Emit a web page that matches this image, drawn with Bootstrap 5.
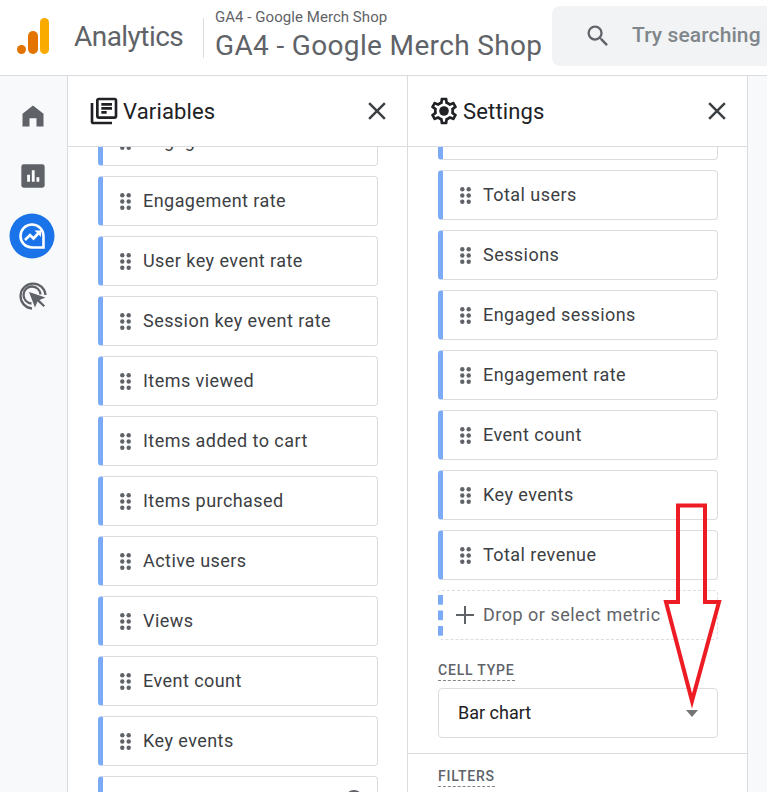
<!DOCTYPE html>
<html lang="en"><head><meta charset="utf-8"><title>Analytics</title>
<link href="https://cdn.jsdelivr.net/npm/bootstrap@5.3.0/dist/css/bootstrap.min.css" rel="stylesheet">
<style>
html,body{height:792px;overflow:hidden;background:#fff}
body{font-family:Roboto,"Liberation Sans",sans-serif;color:#3c4043;position:relative}
.ga-top{height:76px;border-bottom:1px solid #dadce0;overflow:hidden;white-space:nowrap}
.ga-logo{margin-left:16px;width:34px;flex:none;margin-top:-3px}
.ga-brand{margin-left:24px;font-size:28px;color:#5f6368;letter-spacing:-.55px;width:129px;flex:none;margin-top:-2px}
.ga-sep{width:1px;height:40px;background:#dadce0;flex:none}
.ga-acct{margin-left:11px;width:337px;flex:none;color:#5f6368}
.ga-acct small{display:block;font-size:15px;line-height:16px;margin-top:-3px;margin-bottom:3px;letter-spacing:.05px}
.ga-acct strong{display:block;font-weight:400;font-size:28px;line-height:36px;letter-spacing:.35px}
.ga-search{width:260px;height:60px;background:#f1f3f4;border-radius:8px;flex:none;padding-left:32px;font-size:21px;font-weight:500;color:#80868b;gap:20px;margin-top:-4px;letter-spacing:.1px}
.ga-main{height:716px}
.ga-rail{width:68px;background:#f8f9fa;border-right:1px solid #dadce0;flex:none;padding-top:10px}
.ga-railbtn{width:48px;height:60px;margin-left:9px}
.ga-railactive{margin-left:8px}
.ga-panel{width:340px;border-right:1px solid #dadce0;flex:none;overflow:hidden;height:716px}
.ga-phead{height:71px;border-bottom:1px solid #dadce0;padding:0 15px 0 20px;font-size:22px;color:#202124;gap:3px;flex:none;letter-spacing:.15px}
.ga-phead .ga-x{margin-left:auto}
.ga-list{padding:0 29px 0 30px;gap:10px;overflow:hidden;flex:1 1 auto}
.ga-v{margin-top:-31px}
.ga-s{margin-top:-37px}
.ga-chip{height:50px;flex:none;border:1px solid #dadce0;border-left:5px solid #7baaf7;border-radius:4px;padding-left:17px;font-size:18px;color:#3c4043;gap:12px;letter-spacing:.45px;background:#fff}
.ga-chip span,.ga-drop span,.ga-select span{padding-bottom:2px}
.ga-drop{border:1px dashed #dadce0;border-left:none;height:50px;flex:none;border-radius:4px;color:#5f6368;font-size:18px;letter-spacing:.5px;padding-left:18px;gap:9px;position:relative}
.ga-dash{width:5px;height:50px;background:linear-gradient(#7baaf7 0 10px,transparent 10px) 0 4px/100% 15.5px;position:absolute;left:0;top:0}
.ga-cap{font-size:14px;font-weight:500;letter-spacing:.8px;color:#5f6368;border-bottom:1px dashed #80868b;line-height:16px;padding-bottom:2px;align-self:flex-start;flex:none}
.ga-capfirst{margin:12px 0 -3px}
.ga-select{height:50px;border:1px solid #dadce0;border-radius:4px;padding:0 19px;font-size:18px;color:#202124;flex:none}
.ga-select .ga-caret{width:0;height:0;padding:0;border-left:6.5px solid transparent;border-right:6.5px solid transparent;border-top:7px solid #757575}
.ga-rule{height:1px;background:#dadce0;margin:5px -29px 4px -30px;flex:none}
.ga-end{background:#f8f9fa;flex:1 1 auto}
.ga-arrow{position:absolute;left:660px;top:500px;pointer-events:none}
.ga-peek{position:absolute;left:241px;top:12px}
</style></head><body>
<header class="ga-top d-flex align-items-center">
  <svg class="ga-logo" width="34" height="36" viewBox="0 0 34 36"><circle cx="5.500" cy="31.500" r="4.500" fill="#e37400"/><rect x="12" y="13" width="10" height="23" rx="5" fill="#e37400"/><rect x="24" y="0" width="9" height="36" rx="4.500" fill="#f9ab00"/></svg>
  <div class="ga-brand">Analytics</div>
  <div class="ga-sep"></div>
  <div class="ga-acct"><small>GA4 - Google Merch Shop</small><strong>GA4 - Google Merch Shop</strong></div>
  <div class="ga-search d-flex align-items-center">
    <svg width="28" height="28" viewBox="0 0 24 24" fill="#5f6368"><path d="M15.500 14h-.79l-.28-.27A6.470 6.470 0 0 0 16 9.500 6.500 6.500 0 1 0 9.500 16c1.610 0 3.090-.59 4.230-1.570l.27.28v.79l5 4.990L20.490 19l-4.990-5zm-6 0C7.010 14 5 11.990 5 9.500S7.010 5 9.500 5 14 7.010 14 9.500 11.990 14 9.500 14z"/></svg>
    <span>Try searching</span>
  </div>
</header>
<main class="ga-main d-flex">
  <nav class="ga-rail d-flex flex-column">
    <div class="ga-railbtn d-flex align-items-center justify-content-center"><svg width="28" height="28" viewBox="0 0 24 24" fill="#5f6368"><path d="M12 3 3 10v11h6v-7h6v7h6V10z"/></svg></div>
    <div class="ga-railbtn d-flex align-items-center justify-content-center"><svg width="28" height="28" viewBox="0 0 24 24"><rect x="2" y="2" width="20" height="20" rx="2" fill="#5f6368"/><path d="M7 11h2.400v6H7zM11 7h2.400v10H11zM15 13h2.400v4H15z" fill="#fff"/></svg></div>
    <div class="ga-railbtn ga-railactive d-flex align-items-center justify-content-center"><svg width="46" height="46" viewBox="0 0 46 46"><circle cx="23" cy="23" r="22.500" fill="#1a73e8"/><path d="M23 11.500a11.500 11.500 0 1 0 0 23h11.500V23A11.500 11.500 0 0 0 23 11.500z" fill="none" stroke="#fff" stroke-width="2.600"/><path d="M16 27l5-5 3.500 3.500 6-6.500" fill="none" stroke="#fff" stroke-width="2.600"/><path d="M25.500 17.500h6.500v6.500z" fill="#fff"/></svg></div>
    <div class="ga-railbtn d-flex align-items-center justify-content-center"><svg width="30" height="30" viewBox="0 0 30 30" fill="none" stroke="#5f6368" stroke-width="2.300"><path d="M14 27.500A12.500 12.500 0 1 1 27.500 14"/><path d="M13.500 22.500a8.500 8.500 0 1 1 9-9"/><path d="M11 11l6 15.500 2.500-6 6 5.500 1.500-1.500-5.500-5.500 6-2.500z" fill="#5f6368" stroke="none"/></svg></div>
  </nav>

  <section class="ga-panel d-flex flex-column">
    <div class="ga-phead d-flex align-items-center">
      <svg width="32" height="32" viewBox="0 0 24 24" fill="#202124"><path d="M4 6H2v14c0 1.100.9 2 2 2h14v-2H4V6zm16-4H8c-1.100 0-2 .9-2 2v12c0 1.100.9 2 2 2h12c1.100 0 2-.9 2-2V4c0-1.100-.9-2-2-2zm0 14H8V4h12v12zM10 9h8v2h-8zm0 3h4v2h-4zm0-6h8v2h-8z"/></svg>
      <span>Variables</span>
      <svg class="ga-x" width="30" height="30" viewBox="0 0 24 24" fill="#3c4043"><path d="M19 6.410 17.590 5 12 10.590 6.410 5 5 6.410 10.590 12 5 17.590 6.410 19 12 13.410 17.590 19 19 17.590 13.410 12z"/></svg>
    </div>
    <div class="ga-list d-flex flex-column">
      <div class="ga-chip ga-v d-flex align-items-center"><svg width="11" height="17" viewBox="0 0 11 17" fill="#5f6368"><circle cx="2.300" cy="2.300" r="2.200"/><circle cx="8.700" cy="2.300" r="2.200"/><circle cx="2.300" cy="8.500" r="2.200"/><circle cx="8.700" cy="8.500" r="2.200"/><circle cx="2.300" cy="14.700" r="2.200"/><circle cx="8.700" cy="14.700" r="2.200"/></svg><span>Engaged sessions</span></div>
      <div class="ga-chip d-flex align-items-center"><svg width="11" height="17" viewBox="0 0 11 17" fill="#5f6368"><circle cx="2.300" cy="2.300" r="2.200"/><circle cx="8.700" cy="2.300" r="2.200"/><circle cx="2.300" cy="8.500" r="2.200"/><circle cx="8.700" cy="8.500" r="2.200"/><circle cx="2.300" cy="14.700" r="2.200"/><circle cx="8.700" cy="14.700" r="2.200"/></svg><span>Engagement rate</span></div>
      <div class="ga-chip d-flex align-items-center"><svg width="11" height="17" viewBox="0 0 11 17" fill="#5f6368"><circle cx="2.300" cy="2.300" r="2.200"/><circle cx="8.700" cy="2.300" r="2.200"/><circle cx="2.300" cy="8.500" r="2.200"/><circle cx="8.700" cy="8.500" r="2.200"/><circle cx="2.300" cy="14.700" r="2.200"/><circle cx="8.700" cy="14.700" r="2.200"/></svg><span>User key event rate</span></div>
      <div class="ga-chip d-flex align-items-center"><svg width="11" height="17" viewBox="0 0 11 17" fill="#5f6368"><circle cx="2.300" cy="2.300" r="2.200"/><circle cx="8.700" cy="2.300" r="2.200"/><circle cx="2.300" cy="8.500" r="2.200"/><circle cx="8.700" cy="8.500" r="2.200"/><circle cx="2.300" cy="14.700" r="2.200"/><circle cx="8.700" cy="14.700" r="2.200"/></svg><span>Session key event rate</span></div>
      <div class="ga-chip d-flex align-items-center"><svg width="11" height="17" viewBox="0 0 11 17" fill="#5f6368"><circle cx="2.300" cy="2.300" r="2.200"/><circle cx="8.700" cy="2.300" r="2.200"/><circle cx="2.300" cy="8.500" r="2.200"/><circle cx="8.700" cy="8.500" r="2.200"/><circle cx="2.300" cy="14.700" r="2.200"/><circle cx="8.700" cy="14.700" r="2.200"/></svg><span>Items viewed</span></div>
      <div class="ga-chip d-flex align-items-center"><svg width="11" height="17" viewBox="0 0 11 17" fill="#5f6368"><circle cx="2.300" cy="2.300" r="2.200"/><circle cx="8.700" cy="2.300" r="2.200"/><circle cx="2.300" cy="8.500" r="2.200"/><circle cx="8.700" cy="8.500" r="2.200"/><circle cx="2.300" cy="14.700" r="2.200"/><circle cx="8.700" cy="14.700" r="2.200"/></svg><span>Items added to cart</span></div>
      <div class="ga-chip d-flex align-items-center"><svg width="11" height="17" viewBox="0 0 11 17" fill="#5f6368"><circle cx="2.300" cy="2.300" r="2.200"/><circle cx="8.700" cy="2.300" r="2.200"/><circle cx="2.300" cy="8.500" r="2.200"/><circle cx="8.700" cy="8.500" r="2.200"/><circle cx="2.300" cy="14.700" r="2.200"/><circle cx="8.700" cy="14.700" r="2.200"/></svg><span>Items purchased</span></div>
      <div class="ga-chip d-flex align-items-center"><svg width="11" height="17" viewBox="0 0 11 17" fill="#5f6368"><circle cx="2.300" cy="2.300" r="2.200"/><circle cx="8.700" cy="2.300" r="2.200"/><circle cx="2.300" cy="8.500" r="2.200"/><circle cx="8.700" cy="8.500" r="2.200"/><circle cx="2.300" cy="14.700" r="2.200"/><circle cx="8.700" cy="14.700" r="2.200"/></svg><span>Active users</span></div>
      <div class="ga-chip d-flex align-items-center"><svg width="11" height="17" viewBox="0 0 11 17" fill="#5f6368"><circle cx="2.300" cy="2.300" r="2.200"/><circle cx="8.700" cy="2.300" r="2.200"/><circle cx="2.300" cy="8.500" r="2.200"/><circle cx="8.700" cy="8.500" r="2.200"/><circle cx="2.300" cy="14.700" r="2.200"/><circle cx="8.700" cy="14.700" r="2.200"/></svg><span>Views</span></div>
      <div class="ga-chip d-flex align-items-center"><svg width="11" height="17" viewBox="0 0 11 17" fill="#5f6368"><circle cx="2.300" cy="2.300" r="2.200"/><circle cx="8.700" cy="2.300" r="2.200"/><circle cx="2.300" cy="8.500" r="2.200"/><circle cx="8.700" cy="8.500" r="2.200"/><circle cx="2.300" cy="14.700" r="2.200"/><circle cx="8.700" cy="14.700" r="2.200"/></svg><span>Event count</span></div>
      <div class="ga-chip d-flex align-items-center"><svg width="11" height="17" viewBox="0 0 11 17" fill="#5f6368"><circle cx="2.300" cy="2.300" r="2.200"/><circle cx="8.700" cy="2.300" r="2.200"/><circle cx="2.300" cy="8.500" r="2.200"/><circle cx="8.700" cy="8.500" r="2.200"/><circle cx="2.300" cy="14.700" r="2.200"/><circle cx="8.700" cy="14.700" r="2.200"/></svg><span>Key events</span></div>
      <div class="ga-chip d-flex align-items-center position-relative"><svg class="ga-peek" width="20" height="20" viewBox="0 0 20 20" fill="none" stroke="#5f6368" stroke-width="2"><circle cx="10" cy="10" r="8"/></svg></div>
    </div>
  </section>

  <section class="ga-panel d-flex flex-column">
    <div class="ga-phead d-flex align-items-center">
      <svg width="32" height="32" viewBox="0 0 24 24" fill="#202124"><path d="M19.430 12.980c.04-.32.07-.64.07-.98s-.03-.66-.07-.98l2.110-1.650c.19-.15.24-.42.12-.64l-2-3.460c-.12-.22-.39-.3-.61-.22l-2.490 1c-.52-.4-1.080-.73-1.690-.98l-.38-2.650A.49.49 0 0 0 14 2h-4c-.25 0-.46.18-.49.42l-.38 2.650c-.61.25-1.170.59-1.690.98l-2.490-1c-.23-.09-.49 0-.61.22l-2 3.460c-.13.22-.07.49.12.64l2.110 1.650c-.04.32-.07.65-.07.98s.03.66.07.98l-2.110 1.650c-.19.15-.24.42-.12.64l2 3.460c.12.22.39.3.61.22l2.490-1c.52.4 1.080.73 1.690.98l.38 2.650c.03.24.24.42.49.42h4c.25 0 .46-.18.49-.42l.38-2.650c.61-.25 1.170-.59 1.690-.98l2.490 1c.23.09.49 0 .61-.22l2-3.460c.12-.22.07-.49-.12-.64l-2.110-1.650zM17.450 11.270c.04.31.05.52.05.73s-.02.43-.05.73l-.14 1.130.89.7 1.080.84-.7 1.210-1.270-.51-1.040-.42-.9.68c-.43.32-.84.56-1.250.73l-1.060.43-.16 1.130-.2 1.350h-1.400l-.19-1.350-.16-1.130-1.060-.43c-.43-.18-.83-.41-1.230-.71l-.91-.7-1.060.43-1.270.51-.7-1.210 1.080-.84.89-.7-.14-1.130c-.03-.31-.05-.54-.05-.74s.02-.43.05-.73l.14-1.130-.89-.7-1.080-.84.7-1.210 1.270.51 1.040.42.9-.68c.43-.32.84-.56 1.250-.73l1.060-.43.16-1.130.2-1.350h1.390l.19 1.350.16 1.130 1.060.43c.43.18.83.41 1.230.71l.91.7 1.060-.43 1.270-.51.7 1.210-1.070.85-.89.7.14 1.130z"/><circle cx="12" cy="12" r="3.600"/></svg>
      <span>Settings</span>
      <svg class="ga-x" width="30" height="30" viewBox="0 0 24 24" fill="#3c4043"><path d="M19 6.410 17.590 5 12 10.590 6.410 5 5 6.410 10.590 12 5 17.590 6.410 19 12 13.410 17.590 19 19 17.590 13.410 12z"/></svg>
    </div>
    <div class="ga-list d-flex flex-column">
      <div class="ga-chip ga-s d-flex align-items-center"></div>
      <div class="ga-chip d-flex align-items-center"><svg width="11" height="17" viewBox="0 0 11 17" fill="#5f6368"><circle cx="2.300" cy="2.300" r="2.200"/><circle cx="8.700" cy="2.300" r="2.200"/><circle cx="2.300" cy="8.500" r="2.200"/><circle cx="8.700" cy="8.500" r="2.200"/><circle cx="2.300" cy="14.700" r="2.200"/><circle cx="8.700" cy="14.700" r="2.200"/></svg><span>Total users</span></div>
      <div class="ga-chip d-flex align-items-center"><svg width="11" height="17" viewBox="0 0 11 17" fill="#5f6368"><circle cx="2.300" cy="2.300" r="2.200"/><circle cx="8.700" cy="2.300" r="2.200"/><circle cx="2.300" cy="8.500" r="2.200"/><circle cx="8.700" cy="8.500" r="2.200"/><circle cx="2.300" cy="14.700" r="2.200"/><circle cx="8.700" cy="14.700" r="2.200"/></svg><span>Sessions</span></div>
      <div class="ga-chip d-flex align-items-center"><svg width="11" height="17" viewBox="0 0 11 17" fill="#5f6368"><circle cx="2.300" cy="2.300" r="2.200"/><circle cx="8.700" cy="2.300" r="2.200"/><circle cx="2.300" cy="8.500" r="2.200"/><circle cx="8.700" cy="8.500" r="2.200"/><circle cx="2.300" cy="14.700" r="2.200"/><circle cx="8.700" cy="14.700" r="2.200"/></svg><span>Engaged sessions</span></div>
      <div class="ga-chip d-flex align-items-center"><svg width="11" height="17" viewBox="0 0 11 17" fill="#5f6368"><circle cx="2.300" cy="2.300" r="2.200"/><circle cx="8.700" cy="2.300" r="2.200"/><circle cx="2.300" cy="8.500" r="2.200"/><circle cx="8.700" cy="8.500" r="2.200"/><circle cx="2.300" cy="14.700" r="2.200"/><circle cx="8.700" cy="14.700" r="2.200"/></svg><span>Engagement rate</span></div>
      <div class="ga-chip d-flex align-items-center"><svg width="11" height="17" viewBox="0 0 11 17" fill="#5f6368"><circle cx="2.300" cy="2.300" r="2.200"/><circle cx="8.700" cy="2.300" r="2.200"/><circle cx="2.300" cy="8.500" r="2.200"/><circle cx="8.700" cy="8.500" r="2.200"/><circle cx="2.300" cy="14.700" r="2.200"/><circle cx="8.700" cy="14.700" r="2.200"/></svg><span>Event count</span></div>
      <div class="ga-chip d-flex align-items-center"><svg width="11" height="17" viewBox="0 0 11 17" fill="#5f6368"><circle cx="2.300" cy="2.300" r="2.200"/><circle cx="8.700" cy="2.300" r="2.200"/><circle cx="2.300" cy="8.500" r="2.200"/><circle cx="8.700" cy="8.500" r="2.200"/><circle cx="2.300" cy="14.700" r="2.200"/><circle cx="8.700" cy="14.700" r="2.200"/></svg><span>Key events</span></div>
      <div class="ga-chip d-flex align-items-center"><svg width="11" height="17" viewBox="0 0 11 17" fill="#5f6368"><circle cx="2.300" cy="2.300" r="2.200"/><circle cx="8.700" cy="2.300" r="2.200"/><circle cx="2.300" cy="8.500" r="2.200"/><circle cx="8.700" cy="8.500" r="2.200"/><circle cx="2.300" cy="14.700" r="2.200"/><circle cx="8.700" cy="14.700" r="2.200"/></svg><span>Total revenue</span></div>
      <div class="ga-drop d-flex align-items-center"><span class="ga-dash"></span><svg width="18" height="18" viewBox="0 0 18 18" fill="#5f6368"><path d="M8 0h2v8h8v2h-8v8H8v-8H0V8h8z"/></svg><span>Drop or select metric</span></div>
      <div class="ga-cap ga-capfirst">CELL TYPE</div>
      <div class="ga-select d-flex align-items-center justify-content-between"><span>Bar chart</span><span class="ga-caret"></span></div>
      <div class="ga-rule"></div>
      <div class="ga-cap">FILTERS</div>
    </div>
  </section>
  <div class="ga-end"></div>
</main>
<svg class="ga-arrow" width="70" height="210" viewBox="660 500 70 210"><path d="M678 505.500H705V602H719L692 701 666 602H678Z" fill="none" stroke="#ed1c24" stroke-width="4"/></svg>
<script src="https://cdn.jsdelivr.net/npm/bootstrap@5.3.0/dist/js/bootstrap.bundle.min.js"></script>
</body></html>
